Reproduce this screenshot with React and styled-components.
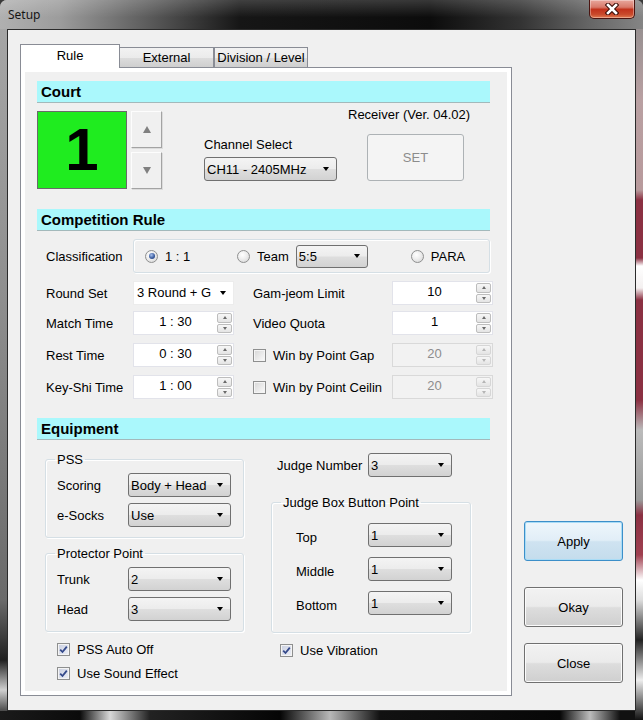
import React from "react";
import styled, { createGlobalStyle } from "styled-components";

const Global = createGlobalStyle`
  html, body { margin: 0; padding: 0; background: #3a3a3a; }
  * { box-sizing: border-box; }
  body { font-family: "Liberation Sans", Arial, sans-serif; font-size: 13px; color: #000; }
`;

const Window = styled.div`
  width: 643px;
  height: 720px;
  display: flex;
  flex-direction: column;
  padding: 0 7px 9px 7px;
  border-radius: 7px 7px 0 0;
  overflow: hidden;
  background:
    linear-gradient(180deg, #8a8a8a 0, #b9a0a2 100px, #b89a9c 190px, #8b3042 200px, #8b3042 258px, #fff 266px, #f4f0f0 288px, #8b3042 300px, #8b3042 400px, #bbb 430px, #9a9a9a 500px, #8b3042 515px, #a04050 555px, #fff 580px, #ddd 600px, #222 640px, #eee 680px, #111 720px) right top / 8px 100% no-repeat,
    linear-gradient(90deg, #1a1a1a 0, #0b0b0b 80px, #d8d8d8 110px, #222 150px, #050505 280px, #b8b8b8 330px, #111 380px, #070707 560px, #bcbcbc 590px, #111 620px) left bottom / 100% 9px no-repeat,
    linear-gradient(180deg, #a8a8a8 0, #8e8e8e 300px, #6a6a6a 600px, #202020 660px, #d0d0d0 690px, #111 720px) left top / 7px 100% no-repeat,
    #555;
`;

const TitleBar = styled.div`
  height: 29px;
  margin: 0 -7px;
  display: flex;
  justify-content: space-between;
  align-items: flex-start;
  padding-left: 8px;
  background:
    linear-gradient(180deg, rgba(255,255,255,0.18) 0, rgba(255,255,255,0) 60%),
    linear-gradient(90deg, #b0b0b0 0, #9c9c9c 60px, #5a5a5a 150px, #161616 240px, #0c0c0c 430px, #333 520px, #666 590px, #858585 643px);
`;

const TitleText = styled.div`
  font: 12px/29px "Noto Sans", "DejaVu Sans", sans-serif;
  color: #151515;
`;

const CloseBtn = styled.div`
  width: 46px;
  height: 19px;
  margin-right: 8px;
  border: 1px solid #4a1410;
  border-top: none;
  border-radius: 0 0 5px 5px;
  background: linear-gradient(180deg, #e8a79d 0, #d8796a 40%, #c2321c 52%, #c94a2c 80%, #e07a50 100%);
  box-shadow: inset 0 0 0 1px rgba(255,255,255,0.35);
  display: flex;
  align-items: center;
  justify-content: center;
`;

const Client = styled.div`
  flex: 1;
  border: 1px solid #2b2b2b;
  background: #f0f0f0;
  display: flex;
  padding: 14px 0 0 12px;
`;

const TabControl = styled.div`
  width: 492px;
  display: flex;
  flex-direction: column;
`;

const TabStrip = styled.div`
  height: 23px;
  display: flex;
  align-items: flex-end;
`;

const Tab = styled.div`
  position: relative;
  z-index: ${(p) => (p.$active ? 2 : 1)};
  width: ${(p) => p.$w}px;
  height: ${(p) => (p.$active ? 24 : 20)}px;
  margin-left: ${(p) => p.$ml || 0}px;
  margin-bottom: ${(p) => (p.$active ? -1 : 0)}px;
  border: 1px solid #898c95;
  border-bottom: none;
  background: ${(p) => (p.$active ? "#fff" : "linear-gradient(180deg, #f2f2f2 0, #ebebeb 50%, #dddddd 51%, #cfcfcf 100%)")};
  display: flex;
  justify-content: center;
  align-items: ${(p) => (p.$active ? "flex-start" : "center")};
  padding-top: ${(p) => (p.$active ? 3 : 0)}px;
  font-size: 13px;
  line-height: 15px;
`;

const Panel = styled.div`
  height: 629px;
  border: 1px solid #898c95;
  background: #fff;
  padding: 4px;
`;

const PanelInner = styled.div`
  height: 100%;
  background: #f0f0f0;
  padding: 9px 0 0 12px;
`;

const SectionHeader = styled.div`
  width: 453px;
  height: 22px;
  margin-top: ${(p) => p.$mt || 0}px;
  background: #aaf8fc;
  border-bottom: 1px solid #a3b9bb;
  padding-left: 4px;
  display: flex;
  align-items: center;
  font: bold 15px "Liberation Sans", Arial, sans-serif;
`;

const CourtRow = styled.div`
  display: flex;
  margin-top: 8px;
  height: 78px;
`;

const CourtNumber = styled.div`
  width: 90px;
  height: 78px;
  background: #1fec1f;
  border: 1px solid #6a6a6a;
  text-align: center;
  font: bold 60px/76px "Liberation Sans", Arial, sans-serif;
`;

const CourtSpin = styled.div`
  display: flex;
  flex-direction: column;
  gap: 4px;
  margin-left: 4px;
  width: 31px;
`;

const CourtSpinBtn = styled.div`
  height: 37px;
  background: #f0f0f0;
  border: 1px solid;
  border-color: #fdfdfd #a3a3a3 #a3a3a3 #fdfdfd;
  box-shadow: 1px 1px 0 #dcdcdc;
  display: flex;
  align-items: center;
  justify-content: center;
`;

const Tri = styled.span`
  width: 0;
  height: 0;
  border-left: ${(p) => p.$s}px solid transparent;
  border-right: ${(p) => p.$s}px solid transparent;
  ${(p) => (p.$up ? "border-bottom" : "border-top")}: ${(p) => p.$h}px solid ${(p) => p.$c};
`;

const ChannelCol = styled.div`
  display: flex;
  flex-direction: column;
  justify-content: flex-end;
  margin-left: 42px;
  padding-bottom: 8px;
`;

const Text = styled.div`
  font-size: 13px;
  line-height: 15px;
  white-space: nowrap;
  margin-bottom: ${(p) => p.$mb || 0}px;
  margin-top: ${(p) => p.$mt || 0}px;
`;

const ReceiverCol = styled.div`
  display: flex;
  flex-direction: column;
  margin-left: 11px;
`;

const SetButton = styled.div`
  width: 97px;
  height: 47px;
  margin: 12px 0 0 19px;
  border: 1px solid #adb2b5;
  border-radius: 3px;
  background: #f4f4f4;
  color: #8c8c8c;
  display: flex;
  align-items: center;
  justify-content: center;
  font-size: 13px;
`;

const Dropdown = styled.div`
  width: ${(p) => p.$w}px;
  height: ${(p) => p.$h || 24}px;
  margin-left: ${(p) => p.$ml || 0}px;
  border: 1px solid ${(p) => (p.$flat ? "#ececec" : "#707070")};
  border-radius: ${(p) => (p.$flat ? 0 : 3)}px;
  background: ${(p) => (p.$flat ? "#fff" : "linear-gradient(180deg, #f4f4f4 0, #ececec 48%, #dedede 52%, #d2d2d2 100%)")};
  display: flex;
  align-items: center;
  padding-left: ${(p) => (p.$flat ? 3 : 2)}px;
  padding-right: 7px;
  font-size: 13px;
  flex-shrink: 0;
`;

const DropText = styled.span`
  flex: 1;
  white-space: nowrap;
  overflow: hidden;
  margin-top: ${(p) => (p.$flat ? -2 : 0)}px;
`;

const ClassRow = styled.div`
  display: flex;
  align-items: center;
  margin-top: 8px;
  height: 34px;
`;

const RowLabel = styled.div`
  width: ${(p) => p.$w}px;
  padding-left: ${(p) => p.$pl || 0}px;
  margin-left: ${(p) => p.$ml || 0}px;
  font-size: 13px;
  line-height: 15px;
  white-space: nowrap;
  flex-shrink: 0;
  margin-top: ${(p) => p.$mt || 0}px;
`;

const ClassGroup = styled.div`
  width: 357px;
  height: 34px;
  border: 1px solid #d5dfe5;
  border-radius: 3px;
  box-shadow: inset 1px 1px 0 #fff, 1px 1px 0 #fff;
  display: flex;
  align-items: center;
  padding-left: 11px;
`;

const RadioOpt = styled.div`
  display: flex;
  align-items: center;
  gap: 7px;
  width: ${(p) => (p.$w ? p.$w + "px" : "auto")};
  margin-left: ${(p) => p.$ml || 0}px;
  font-size: 13px;
`;

const RadioCircle = styled.span`
  width: 13px;
  height: 13px;
  border-radius: 50%;
  border: 1px solid #8e8f8f;
  background: radial-gradient(circle at 40% 35%, #ffffff 0, #f0f0f0 40%, #d2d2d2 100%);
  display: flex;
  align-items: center;
  justify-content: center;
  flex-shrink: 0;
`;

const RadioDot = styled.span`
  width: 6px;
  height: 6px;
  border-radius: 50%;
  background: radial-gradient(circle at 40% 35%, #a9c2ee 0, #3d5ea0 55%, #1c3670 100%);
`;

const FormRow = styled.div`
  display: flex;
  align-items: center;
  height: 24px;
  margin-top: ${(p) => p.$mt || 0}px;
`;

const SpinBox = styled.div`
  width: 101px;
  height: 24px;
  display: flex;
  border: 1px solid ${(p) => (p.$disabled ? "#d9d9d9" : "#e2e3ea")};
  background: ${(p) => (p.$disabled ? "#f2f2f2" : "#fff")};
  flex-shrink: 0;
`;

const SpinValue = styled.div`
  flex: 1;
  text-align: center;
  font-size: 13px;
  line-height: 20px;
  color: ${(p) => (p.$disabled ? "#8d8d8d" : "#000")};
`;

const SpinButtons = styled.div`
  width: 16px;
  display: flex;
  flex-direction: column;
  gap: 1px;
  padding: 1px 1px 1px 0;
`;

const SpinHalf = styled.div`
  flex: 1;
  border: 1px solid ${(p) => (p.$disabled ? "#d6d6d6" : "#bdbdbd")};
  border-radius: 2px;
  background: linear-gradient(180deg, #f7f7f7, #e4e4e4);
  display: flex;
  align-items: center;
  justify-content: center;
`;

const CheckOpt = styled.div`
  display: flex;
  align-items: center;
  gap: 7px;
  height: 16px;
  width: ${(p) => (p.$w ? p.$w + "px" : "auto")};
  margin-left: ${(p) => p.$ml || 0}px;
  margin-top: ${(p) => p.$mt || 0}px;
  font-size: 13px;
  white-space: nowrap;
  flex-shrink: 0;
`;

const CheckBox = styled.span`
  width: 13px;
  height: 13px;
  border: 1px solid #8e8f8f;
  background: ${(p) => (p.$checked ? "linear-gradient(135deg, #c9cfe0, #eef0f7)" : "linear-gradient(135deg, #d6d6d6, #fbfbfb)")};
  box-shadow: inset 0 0 0 1px #f4f4f4;
  display: flex;
  align-items: center;
  justify-content: center;
  flex-shrink: 0;
`;

const EquipBody = styled.div`
  display: flex;
  align-items: flex-start;
  margin-left: 8px;
`;

const Column = styled.div`
  width: ${(p) => p.$w}px;
  margin-left: ${(p) => p.$ml || 0}px;
  display: flex;
  flex-direction: column;
`;

const GroupBox = styled.fieldset`
  margin: ${(p) => p.$mt || 0}px 0 0 0;
  padding: ${(p) => p.$pt}px 0 ${(p) => p.$pb}px 9px;
  border: 1px solid #d5dfe5;
  border-radius: 3px;
  box-shadow: inset 1px 1px 0 #fff, 1px 1px 0 #fff;
  min-inline-size: 0;
  display: flex;
  flex-direction: column;
  gap: ${(p) => p.$gap}px;
`;

const Legend = styled.legend`
  padding: 0 2px;
  font-size: 13px;
  line-height: 15px;
`;

const ButtonCol = styled.div`
  width: 99px;
  margin-left: 12px;
  padding-top: 477px;
  display: flex;
  flex-direction: column;
`;

const DlgButton = styled.div`
  height: 40px;
  margin-top: ${(p) => p.$mt || 0}px;
  border: 1px solid ${(p) => (p.$default ? "#3c8fc9" : "#707070")};
  border-radius: 3px;
  background: ${(p) =>
    p.$default
      ? "linear-gradient(180deg, #eef6fb 0, #e1eef7 48%, #cfe3f1 52%, #c4dcec 100%)"
      : "linear-gradient(180deg, #f2f2f2 0, #ebebeb 48%, #dddddd 52%, #cfcfcf 100%)"};
  box-shadow: ${(p) => (p.$default ? "inset 0 0 0 1px #a9dcf6" : "inset 0 0 0 1px #fbfbfb")};
  display: flex;
  align-items: center;
  justify-content: center;
  font-size: 13px;
`;

const Check = () => (
  <svg width="9" height="9" viewBox="0 0 9 9">
    <path d="M1.2 4.6 L3.5 7 L7.8 1.6" fill="none" stroke="#34498a" strokeWidth="1.8" />
  </svg>
);

const CloseX = () => (
  <svg width="14" height="12" viewBox="0 0 14 12">
    <path d="M3 2 L11 10 M11 2 L3 10" stroke="#3a0c06" strokeWidth="4.6" strokeLinecap="square" />
    <path d="M3 2 L11 10 M11 2 L3 10" stroke="#fff" strokeWidth="2.6" strokeLinecap="square" />
  </svg>
);

const Select = ({ w, h, ml, flat, children }) => (
  <Dropdown $w={w} $h={h} $ml={ml} $flat={flat}>
    <DropText $flat={flat}>{children}</DropText>
    <Tri $s={3.5} $h={4} $c="#000" />
  </Dropdown>
);

const Spin = ({ value, disabled }) => (
  <SpinBox $disabled={disabled}>
    <SpinValue $disabled={disabled}>{value}</SpinValue>
    <SpinButtons>
      <SpinHalf $disabled={disabled}>
        <Tri $up $s={2.5} $h={3} $c={disabled ? "#b5b5b5" : "#6a6a6a"} />
      </SpinHalf>
      <SpinHalf $disabled={disabled}>
        <Tri $s={2.5} $h={3} $c={disabled ? "#b5b5b5" : "#6a6a6a"} />
      </SpinHalf>
    </SpinButtons>
  </SpinBox>
);

const Radio = ({ checked }) => <RadioCircle>{checked && <RadioDot />}</RadioCircle>;

const Checkbox = ({ checked, label, ml, mt, w }) => (
  <CheckOpt $ml={ml} $mt={mt} $w={w}>
    <CheckBox $checked={checked}>{checked && <Check />}</CheckBox>
    {label}
  </CheckOpt>
);

export default function App() {
  return (
    <>
      <Global />
      <Window>
        <TitleBar>
          <TitleText>Setup</TitleText>
          <CloseBtn>
            <CloseX />
          </CloseBtn>
        </TitleBar>
        <Client>
          <TabControl>
            <TabStrip>
              <Tab $active $w={100}>Rule</Tab>
              <Tab $w={95} $ml={-1}>External</Tab>
              <Tab $w={94}>Division / Level</Tab>
            </TabStrip>
            <Panel>
              <PanelInner>
                <SectionHeader>Court</SectionHeader>
                <CourtRow>
                  <CourtNumber>1</CourtNumber>
                  <CourtSpin>
                    <CourtSpinBtn>
                      <Tri $up $s={4.5} $h={7} $c="#808080" />
                    </CourtSpinBtn>
                    <CourtSpinBtn>
                      <Tri $s={4.5} $h={7} $c="#808080" />
                    </CourtSpinBtn>
                  </CourtSpin>
                  <ChannelCol>
                    <Text $mb={5}>Channel Select</Text>
                    <Select w={133}>CH11 - 2405MHz</Select>
                  </ChannelCol>
                  <ReceiverCol>
                    <Text $mt={-4}>Receiver (Ver. 04.02)</Text>
                    <SetButton>SET</SetButton>
                  </ReceiverCol>
                </CourtRow>

                <SectionHeader $mt={20}>Competition Rule</SectionHeader>
                <ClassRow>
                  <RowLabel $w={96} $pl={9}>Classification</RowLabel>
                  <ClassGroup>
                    <RadioOpt $w={92}>
                      <Radio checked />1 : 1
                    </RadioOpt>
                    <RadioOpt>
                      <Radio />Team
                      <Select w={72} h={23}>5:5</Select>
                    </RadioOpt>
                    <RadioOpt $ml={43}>
                      <Radio />PARA
                    </RadioOpt>
                  </ClassGroup>
                </ClassRow>

                <FormRow $mt={8}>
                  <RowLabel $w={96} $pl={9}>Round Set</RowLabel>
                  <Select w={101} flat>3 Round + G</Select>
                  <RowLabel $w={139} $ml={19}>Gam-jeom Limit</RowLabel>
                  <Spin value="10" />
                </FormRow>
                <FormRow $mt={6}>
                  <RowLabel $w={96} $pl={9}>Match Time</RowLabel>
                  <Spin value="1 : 30" />
                  <RowLabel $w={139} $ml={19}>Video Quota</RowLabel>
                  <Spin value="1" />
                </FormRow>
                <FormRow $mt={8}>
                  <RowLabel $w={96} $pl={9}>Rest Time</RowLabel>
                  <Spin value="0 : 30" />
                  <Checkbox label="Win by Point Gap" ml={19} w={139} />
                  <Spin value="20" disabled />
                </FormRow>
                <FormRow $mt={8}>
                  <RowLabel $w={96} $pl={9}>Key-Shi Time</RowLabel>
                  <Spin value="1 : 00" />
                  <Checkbox label="Win by Point Ceilin" ml={19} w={139} />
                  <Spin value="20" disabled />
                </FormRow>

                <SectionHeader $mt={19}>Equipment</SectionHeader>
                <EquipBody>
                  <Column $w={199}>
                    <GroupBox $mt={12} $pt={6} $pb={10} $gap={6}>
                      <Legend>PSS</Legend>
                      <FormRow>
                        <RowLabel $w={71} $ml={2}>Scoring</RowLabel>
                        <Select w={103}>Body + Head</Select>
                      </FormRow>
                      <FormRow>
                        <RowLabel $w={71} $ml={2}>e-Socks</RowLabel>
                        <Select w={103}>Use</Select>
                      </FormRow>
                    </GroupBox>
                    <GroupBox $mt={8} $pt={6} $pb={10} $gap={6}>
                      <Legend>Protector Point</Legend>
                      <FormRow>
                        <RowLabel $w={71} $ml={2}>Trunk</RowLabel>
                        <Select w={103}>2</Select>
                      </FormRow>
                      <FormRow>
                        <RowLabel $w={71} $ml={2}>Head</RowLabel>
                        <Select w={103}>3</Select>
                      </FormRow>
                    </GroupBox>
                    <Checkbox checked label="PSS Auto Off" ml={12} mt={9} />
                    <Checkbox checked label="Use Sound Effect" ml={12} mt={8} />
                  </Column>
                  <Column $w={200} $ml={27}>
                    <FormRow $mt={13}>
                      <RowLabel $w={91} $ml={6}>Judge Number</RowLabel>
                      <Select w={84}>3</Select>
                    </FormRow>
                    <GroupBox $mt={18} $pt={13} $pb={17} $gap={10}>
                      <Legend>Judge Box Button Point</Legend>
                      <FormRow>
                        <RowLabel $w={72} $ml={15} $mt={4}>Top</RowLabel>
                        <Select w={84}>1</Select>
                      </FormRow>
                      <FormRow>
                        <RowLabel $w={72} $ml={15} $mt={4}>Middle</RowLabel>
                        <Select w={84}>1</Select>
                      </FormRow>
                      <FormRow>
                        <RowLabel $w={72} $ml={15} $mt={4}>Bottom</RowLabel>
                        <Select w={84}>1</Select>
                      </FormRow>
                    </GroupBox>
                    <Checkbox checked label="Use Vibration" ml={9} mt={9} />
                  </Column>
                </EquipBody>
              </PanelInner>
            </Panel>
          </TabControl>
          <ButtonCol>
            <DlgButton $default>Apply</DlgButton>
            <DlgButton $mt={26}>Okay</DlgButton>
            <DlgButton $mt={16}>Close</DlgButton>
          </ButtonCol>
        </Client>
      </Window>
    </>
  );
}
